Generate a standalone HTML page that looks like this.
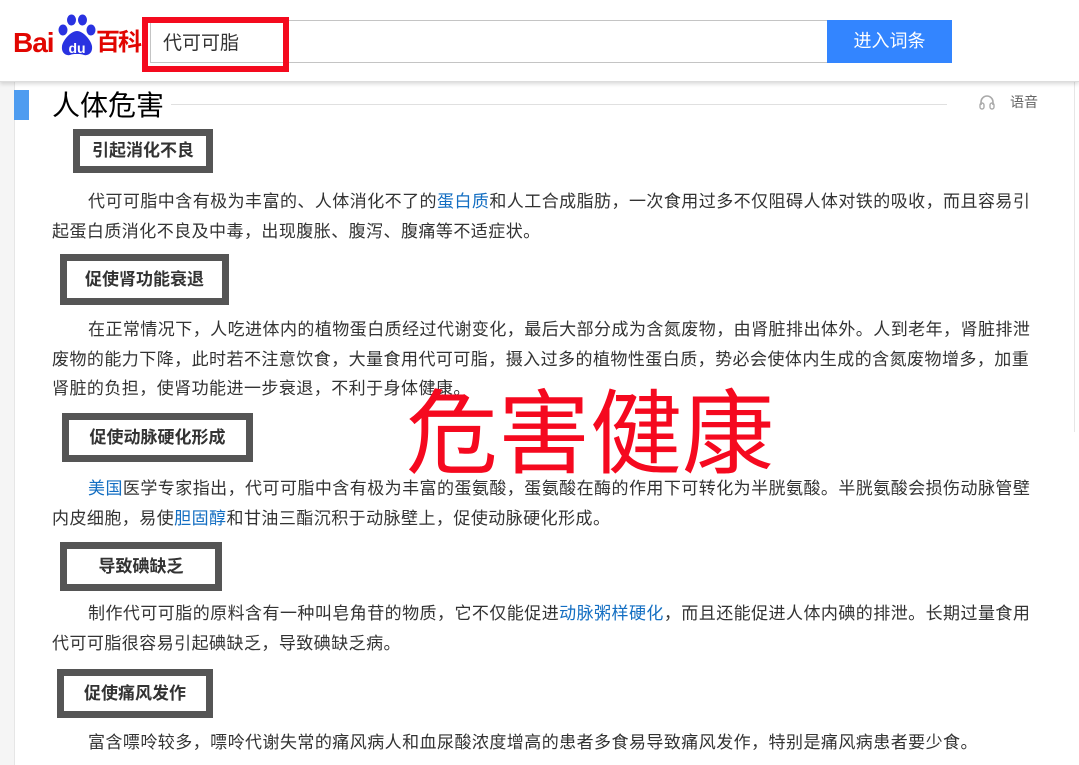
<!DOCTYPE html>
<html><head><meta charset="utf-8"><style>
*{margin:0;padding:0;box-sizing:border-box}
body{width:1079px;height:765px;overflow:hidden;background:#fff;position:relative;font-family:"Liberation Sans","Noto Sans CJK SC",sans-serif;color:#333}
.a{position:absolute;white-space:nowrap}
.hdr{position:absolute;left:0;top:0;width:1079px;height:82px;background:#fff;border-bottom:1px solid #ddd;box-shadow:0 2px 4px rgba(0,0,0,.15)}
.p{position:absolute;left:52px;width:988px;font-size:17px;line-height:30px;color:#333;white-space:normal;letter-spacing:0.45px;text-indent:36px}
.p a{color:#136ec2;text-decoration:none}
.h{position:absolute;border:7px solid #555;background:#fff;font-size:17px;font-weight:bold;color:#333;line-height:30px;text-align:center;letter-spacing:0px}
</style></head><body>
<div class="a" style="left:0;top:82px;width:15px;height:683px;background:#f5f5f5;border-right:1px solid #e6e6e6"></div>
<div class="a" style="left:1074px;top:82px;width:5px;height:350px;border-left:1px solid #e6e6e6"></div>
<div class="hdr"></div>
<div class="a" style="left:13px;top:26px;font-size:28px;font-weight:bold;color:#e10601;letter-spacing:-1px;line-height:34px">Bai</div>
<svg class="a" style="left:56px;top:13px" width="42" height="44" viewBox="0 0 42 44">
<ellipse cx="7" cy="17" rx="4.5" ry="5.5" fill="#2932e1"/><ellipse cx="15.5" cy="7" rx="4.5" ry="5.5" fill="#2932e1"/><ellipse cx="26.5" cy="7" rx="4.5" ry="5.5" fill="#2932e1"/><ellipse cx="35" cy="17" rx="4.5" ry="5.5" fill="#2932e1"/>
<path d="M21 18c-6 0-14 9-15 15-1 7 4 10 8 9 3-1 4-1 7-1s4 0 7 1c4 1 9-2 8-9-1-6-9-15-15-15z" fill="#2932e1"/>
<text x="21" y="40" font-size="14" fill="#fff" text-anchor="middle" font-family="Liberation Sans" font-weight="bold">du</text></svg>
<div class="a" style="left:96px;top:27px;font-size:24px;font-weight:bold;color:#e10601;letter-spacing:-2px;line-height:32px">百科</div>
<div class="a" style="left:150px;top:20px;width:680px;height:43px;border:1px solid #c4c4c4;background:#fff"></div>
<div class="a" style="left:142px;top:17px;width:147px;height:55px;border:6px solid #f40a1e"></div>
<div class="a" style="left:163px;top:30px;font-size:19px;color:#333;line-height:28px">代可可脂</div>
<div class="a" style="left:827px;top:20px;width:125px;height:43px;background:#3385ff;color:#fff;font-size:18px;line-height:43px;text-align:center">进入词条</div>

<div class="a" style="left:14px;top:90px;width:15px;height:30px;background:#4e9cf0"></div>
<div class="a" style="left:52px;top:86px;font-size:28px;color:#000;line-height:40px">人体危害</div>
<div class="a" style="left:171px;top:104px;width:776px;height:1px;background:#e0e0e0"></div>
<svg class="a" style="left:978px;top:93px" width="18" height="17" viewBox="0 0 18 17"><path d="M3 12V9a6 6 0 0 1 12 0v3" fill="none" stroke="#aaa" stroke-width="1.6"/><rect x="2" y="10" width="4" height="6" rx="2" fill="none" stroke="#aaa" stroke-width="1.4"/><rect x="12" y="10" width="4" height="6" rx="2" fill="none" stroke="#aaa" stroke-width="1.4"/></svg>
<div class="a" style="left:1010px;top:92px;font-size:14px;color:#666;line-height:20px">语音</div>

<div class="h" style="left:73px;top:129px;width:140px;height:44px">引起消化不良</div>
<div class="p" style="top:187px">代可可脂中含有极为丰富的、人体消化不了的<a>蛋白质</a>和人工合成脂肪，一次食用过多不仅阻碍人体对铁的吸收，而且容易引起蛋白质消化不良及中毒，出现腹胀、腹泻、腹痛等不适症状。</div>

<div class="h" style="left:60px;top:254px;width:169px;height:51px;line-height:37px">促使肾功能衰退</div>
<div class="p" style="top:315px;line-height:29.5px">在正常情况下，人吃进体内的植物蛋白质经过代谢变化，最后大部分成为含氮废物，由肾脏排出体外。人到老年，肾脏排泄废物的能力下降，此时若不注意饮食，大量食用代可可脂，摄入过多的植物性蛋白质，势必会使体内生成的含氮废物增多，加重肾脏的负担，使肾功能进一步衰退，不利于身体健康。</div>

<div class="h" style="left:62px;top:413px;width:191px;height:49px;line-height:35px">促使动脉硬化形成</div>
<div class="p" style="top:474px"><a>美国</a>医学专家指出，代可可脂中含有极为丰富的蛋氨酸，蛋氨酸在酶的作用下可转化为半胱氨酸。半胱氨酸会损伤动脉管壁内皮细胞，易使<a>胆固醇</a>和甘油三酯沉积于动脉壁上，促使动脉硬化形成。</div>

<div class="h" style="left:60px;top:542px;width:162px;height:49px;line-height:35px">导致碘缺乏</div>
<div class="p" style="top:599px">制作代可可脂的原料含有一种叫皂角苷的物质，它不仅能促进<a>动脉粥样硬化</a>，而且还能促进人体内碘的排泄。长期过量食用代可可脂很容易引起碘缺乏，导致碘缺乏病。</div>

<div class="h" style="left:57px;top:669px;width:156px;height:49px;line-height:35px">促使痛风发作</div>
<div class="p" style="top:728px">富含嘌呤较多，嘌呤代谢失常的痛风病人和血尿酸浓度增高的患者多食易导致痛风发作，特别是痛风病患者要少食。</div>

<div class="a" style="left:406px;top:372px;font-size:92px;line-height:110px;color:#f5091f;font-family:'Noto Sans CJK SC',sans-serif">危害健康</div>
</body></html>
